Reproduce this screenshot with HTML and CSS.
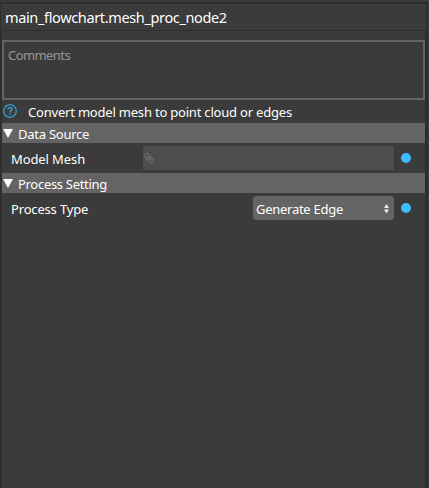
FILE: index.html
```
<!DOCTYPE html>
<html lang="en">
<head>
<meta charset="utf-8">
<title>main_flowchart.mesh_proc_node2</title>
<link rel="stylesheet" href="styles.css">
</head>
<body>
<main class="panel">
  <header class="title"><span class="t-title">main_flowchart.mesh_proc_node2</span></header>
  <div class="content">
    <div class="comments"><span class="t-comments">Comments</span></div>
    <div class="info">
      <svg class="help" width="14" height="14" viewBox="0 0 14 14" fill="none" stroke="#3a9fd0">
        <circle cx="7" cy="7" r="6.3" stroke-width="1.2"/>
        <path d="M5 5.6C5 3 9 3 9 5.4C9 6.8 7 6.7 7 8.4M7 9.4V10.8" stroke-width="1.5"/>
      </svg>
      <span class="t-info">Convert model mesh to point cloud or edges</span>
    </div>
    <div class="section"><svg class="arrow" width="10" height="9"><path d="M0 0H10L5 9Z" fill="#fff"/></svg><span class="t-data">Data Source</span></div>
    <div class="row">
      <span class="label t-mesh">Model Mesh</span>
      <div class="field">
        <svg width="12" height="12" viewBox="0 0 12 12" fill="none" stroke="#757575">
          <circle cx="4" cy="3.8" r="2.4"/><circle cx="8.4" cy="8.3" r="2.4"/><path d="M4 4L8.4 8.3M2.4 6.8L5.4 8.2M7 3.5L9 5.2"/>
        </svg>
      </div>
      <span class="dot"></span>
    </div>
    <div class="section"><svg class="arrow" width="10" height="9"><path d="M0 0H10L5 9Z" fill="#fff"/></svg><span class="t-process">Process Setting</span></div>
    <div class="row">
      <span class="label t-type">Process Type</span>
      <div class="select"><span class="t-edge">Generate Edge</span>
        <svg width="5" height="10" viewBox="0 0 5 10" fill="#f2f2f2"><path d="M2.5 0L4.9 4H.1ZM2.5 9.6L4.9 5.6H.1Z"/></svg>
      </div>
      <span class="dot"></span>
    </div>
  </div>
</main>
</body>
</html>
```
FILE: styles.css
```
* { box-sizing: border-box; }
body {
  margin: 0;
  height: 488px;
  overflow: hidden;
  background: #2e2e2e;
  color: #fff;
  font: 13px/20px "Noto Sans", sans-serif;
  white-space: nowrap;
}
.panel {
  height: 488px;
  border-top: 2px solid #3b3b3b;
  border-right: 1px solid #3b3b3b;
  padding-top: 2px;
}
.title {
  height: 26px;
  margin: 0 2px 1px 1px;
  padding: 3px 0 0 4px;
  background: #3b3b3b;
  font-size: 14.5px;
}
.t-title { letter-spacing: -0.36px; }
.t-comments { letter-spacing: -0.58px; }
.t-info { letter-spacing: -0.2px; }
.t-data { letter-spacing: -0.25px; }
.t-mesh { letter-spacing: -0.1px; }
.t-process { letter-spacing: -0.3px; }
.t-type { letter-spacing: -0.17px; }
.t-edge { letter-spacing: -0.27px; }
.content {
  height: 457px;
  margin: 0 3px 0 2px;
  padding-top: 9px;
  background: #3b3b3b;
}
.comments {
  height: 60px;
  border: 2px solid #646464;
  padding: 3px 0 0 4px;
  color: #969696;
}
.info {
  display: flex;
  height: 23px;
  padding: 4px 0 0 1px;
}
.help { margin-right: 11px; }
.info span { margin-top: -2px; }
.section {
  display: flex;
  height: 20px;
  padding-left: 1px;
  background: #646464;
}
.arrow { margin: 6px 5px 0 0; }
.section span { margin-top: 1px; }
.row {
  display: flex;
  align-items: center;
  height: 30px;
  padding: 0 14px 0 9px;
}
.label { margin-top: 2px; }
.field {
  display: flex;
  width: 251px;
  height: 24px;
  margin-left: auto;
  padding: 6px 0 0;
  background: #4d4d4d;
}
.select {
  display: flex;
  align-items: center;
  justify-content: space-between;
  width: 141px;
  height: 24px;
  margin-left: auto;
  padding: 1px 5px 0 3px;
  border-radius: 3px;
  background: #646464;
}
.dot {
  width: 10px;
  height: 10px;
  margin-left: 7px;
  border-radius: 50%;
  background: #3dbbff;
}
```
